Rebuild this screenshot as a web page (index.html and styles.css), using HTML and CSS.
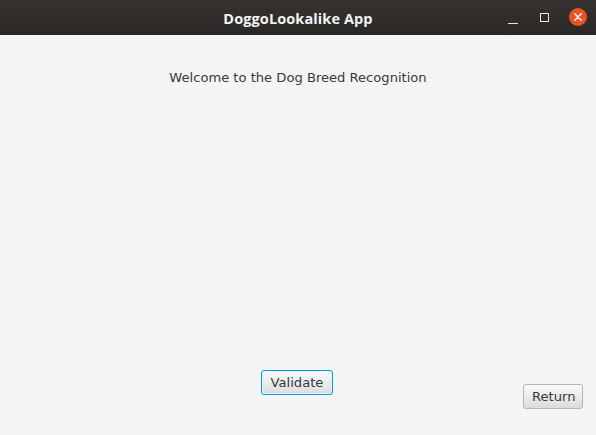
FILE: index.html
```html
<!DOCTYPE html>
<html>
<head>
<meta charset="utf-8">
<link rel="stylesheet" href="styles.css">
</head>
<body>
<div class="window">
  <header class="titlebar">
    <div class="title">DoggoLookalike App</div>
    <div class="controls">
      <span class="ctl min"><span class="min-bar"></span></span>
      <span class="ctl max"><span class="max-box"></span></span>
      <span class="ctl close">
        <svg width="18" height="18" viewBox="0 0 18 18"><circle cx="9" cy="9" r="9" fill="#e95420"/><path d="M5.8 5.8 L12.2 12.2 M12.2 5.8 L5.8 12.2" stroke="#fff" stroke-width="1.4" stroke-linecap="round"/></svg>
      </span>
    </div>
  </header>
  <main class="content">
    <p class="welcome">Welcome to the Dog Breed Recognition</p>
    <div class="spacer"></div>
    <div class="footer">
      <span></span>
      <button class="btn focused">Validate</button>
      <button class="btn ret">Return</button>
    </div>
  </main>
</div>
</body>
</html>
```
FILE: styles.css
```css
* { box-sizing: border-box; }
html, body { margin: 0; padding: 0; }
body { width: 596px; height: 435px; overflow: hidden; background: #f4f4f4; }
.window { width: 596px; height: 435px; display: flex; flex-direction: column; }
.titlebar {
  height: 35px; flex: none;
  background: linear-gradient(#353230, #2b2927);
  display: grid; grid-template-columns: 1fr auto 1fr; align-items: center;
}
.title {
  grid-column: 2;
  color: #f2f2f2; font-family: "Open Sans", "DejaVu Sans", sans-serif; font-weight: 700; font-size: 14.5px;
  letter-spacing: 0.1px; padding-top: 1px;
}
.controls { grid-column: 3; justify-self: end; display: flex; align-items: center; padding-right: 9px; }
.ctl { display: flex; align-items: center; justify-content: center; }
.min { width: 14px; height: 18px; margin-right: 17px; }
.min-bar { width: 10px; height: 1px; background: #e6e6e6; margin-top: 11px; }
.max { width: 14px; height: 18px; margin-right: 18px; }
.max-box { width: 9px; height: 9px; border: 1.5px solid #e6e6e6; }
.close { width: 18px; height: 18px; margin-top: -2px; }
.content {
  flex: 1; display: flex; flex-direction: column; background: #f4f4f4;
  font-family: "DejaVu Sans", sans-serif; color: #333;
}
.welcome { margin: 34px 0 0; text-align: center; font-size: 13.1px; line-height: 18px; color: #353a40; }
.spacer { flex: 1; }
.footer {
  display: grid; grid-template-columns: 1fr auto 1fr;
  padding: 0 13px 26px 13px;
}
.btn {
  font-family: "DejaVu Sans", sans-serif; font-size: 13.1px; color: #353a40;
  height: 25px; padding: 0 8px;
  background: linear-gradient(#fafafa, #dcdcdc);
  border: 1px solid #b5b5b5; border-radius: 3px;
}
.focused {
  align-self: start; width: 72px;
  border-color: #039ed3; box-shadow: inset 0 0 0 1px #dff3fb;
  position: relative; left: -1px;
}
.ret { align-self: end; justify-self: end; width: 60px; margin-top: 14px; }
```
